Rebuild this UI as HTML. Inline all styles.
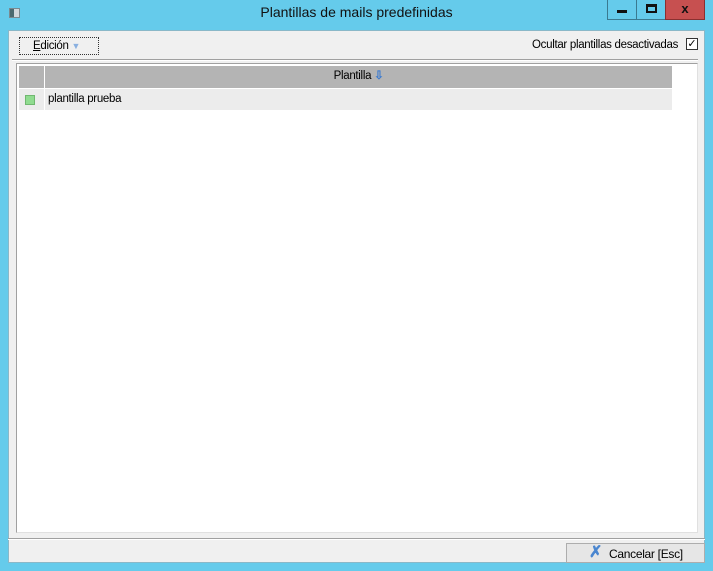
<!DOCTYPE html><html><head><style>
body{margin:0;width:713px;height:571px;background:#65cbeb;position:relative;overflow:hidden;font-family:"Liberation Sans",sans-serif;font-size:12px;color:#000}
div{position:absolute;box-sizing:border-box}
.t{font-size:11.5px;letter-spacing:-0.3px}
</style></head><body>
<div style="left:9px;top:8px;width:11px;height:10px;background:#d0d8dc;border:1px solid #7a8a90"><div style="left:0;top:0;width:4px;height:8px;background:#4a6a70"></div></div>
<div style="left:0;top:4px;width:713px;text-align:center;font-size:14px;color:#111">Plantillas de mails predefinidas</div>
<div style="left:607px;top:0;width:30px;height:20px;border:1px solid #3a7a90;border-top:0;background:#65cbeb"><div style="left:9px;top:10px;width:10px;height:3px;background:#111"></div></div>
<div style="left:636px;top:0;width:30px;height:20px;border:1px solid #3a7a90;border-top:0;background:#65cbeb"><div style="left:9px;top:4px;width:11px;height:9px;border:2px solid #111;border-top-width:3px"></div></div>
<div style="left:665px;top:0;width:40px;height:20px;background:#c75050;border:1px solid #8a3030;border-top:0;color:#111;font-weight:bold;font-size:13px;text-align:center;line-height:17px">x</div>
<div style="left:8px;top:30px;width:697px;height:533px;background:#f0f0f0;border:1px solid #8ab8c8"></div>
<div class="t" style="left:19px;top:37px;width:80px;height:18px;border:1px dotted #333;padding:2px 0 0 13px"><u>E</u>dición <span style="color:#8ab0e0;font-size:9px">▼</span></div>
<div class="t" style="left:532px;top:39px">Ocultar plantillas desactivadas</div>
<div style="left:686px;top:38px;width:12px;height:12px;border:1px solid #333;background:#fff;font-size:11px;line-height:10px;text-align:center">✓</div>
<div style="left:12px;top:59px;width:686px;height:2px;border-top:1px solid #a0a0a0;border-bottom:1px solid #fff"></div>
<div style="left:16px;top:63px;width:682px;height:470px;background:#fff;border:1px solid #a0a0a0;border-right-color:#e0e0e0;border-bottom-color:#e0e0e0"></div>
<div style="left:19px;top:66px;width:25px;height:22px;background:#b4b4b4"></div>
<div class="t" style="left:45px;top:66px;width:627px;height:22px;background:#b4b4b4;text-align:center;line-height:20px">Plantilla <span style="color:#3a7ad0;font-weight:bold">⇩</span></div>
<div style="left:19px;top:89px;width:25px;height:21px;background:#ececec"><div style="left:6px;top:6px;width:10px;height:10px;background:#90dc90;border:1px solid #70b870"></div></div>
<div class="t" style="left:45px;top:89px;width:627px;height:21px;background:#ececec;padding:4px 0 0 3px">plantilla prueba</div>
<div style="left:8px;top:538px;width:697px;height:2px;border-top:1px solid #a0a0a0;border-bottom:1px solid #fff"></div>
<div style="left:566px;top:543px;width:139px;height:20px;border:1px solid #adadad;background:#e6e6e6">
<div style="left:22px;top:0px;color:#4a86d0;font-size:16px;font-weight:bold;line-height:18px">✗</div>
<div class="t" style="left:42px;top:3px;font-size:12px">Cancelar [Esc]</div>
</div>
</body></html>
